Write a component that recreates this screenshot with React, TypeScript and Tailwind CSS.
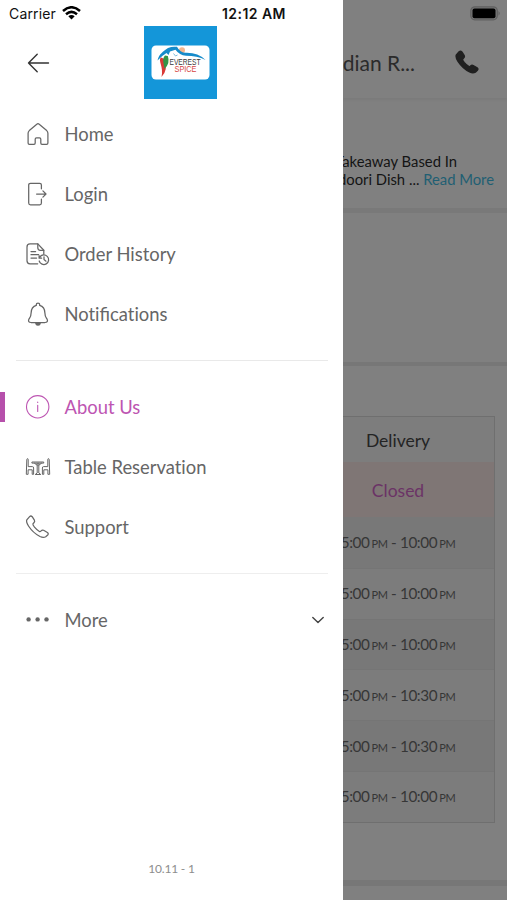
import type { ReactNode } from "react";

const icon = "h-6 w-6 overflow-visible";

function LineIcon({ children, width = 1.25 }: { children: ReactNode; width?: number }) {
  return (
    <svg className={icon} viewBox="0 0 24 24" fill="none" stroke="currentColor" strokeWidth={width} strokeLinecap="round" strokeLinejoin="round">
      {children}
    </svg>
  );
}

const HomeIcon = () => (
  <LineIcon>
    <path d="M12 1.7 Q12.6 1.7 13.2 2.2 L20.7 8.6 Q21.9 9.7 21.9 11.2 V21 Q21.9 22.3 20.6 22.3 H16 Q14.8 22.3 14.8 21 V17.2 Q14.8 15.8 13.5 15.8 H10.5 Q9.2 15.8 9.2 17.2 V21 Q9.2 22.3 8 22.3 H3.4 Q2.1 22.3 2.1 21 V11.2 Q2.1 9.7 3.3 8.6 L10.8 2.2 Q11.4 1.7 12 1.7Z" />
  </LineIcon>
);

const LoginIcon = () => (
  <LineIcon>
    <path d="M15.4 6.8 V3 Q15.4 1.3 13.7 1.3 H4.5 Q2.7 1.3 2.7 3 V21 Q2.7 22.8 4.5 22.8 H13.7 Q15.4 22.8 15.4 21 V17.2" />
    <path d="M10.6 12 H19.8 M16.9 8.9 L20 12 L16.9 15.1" />
  </LineIcon>
);

const HistoryIcon = () => (
  <LineIcon>
    <path d="M11.7 21.8 H4 Q1 21.8 1 18.8 V4.9 Q1 1.9 4 1.9 H11.8 L17.8 8.3 V12" />
    <path d="M11.8 1.9 V5.8 Q11.8 8.3 14.3 8.3 H17.8 M5 9.5 H9.6 M5 12.7 H12.6 M5 16 H10.6" />
    <path d="M13.7 15.3 A4.8 4.8 0 1 1 13.2 19 M13.1 13.7 V16.2 H15.6 M18 14.8 V17.5 L20 19.2" />
  </LineIcon>
);

const BellIcon = () => (
  <LineIcon>
    <path d="M10.3 3.4 V2.4 Q10.3 1 12 1 Q13.7 1 13.7 2.4 V3.4 Q18.8 4.8 18.9 11 C18.9 14.6 19.9 15.3 21.2 17.4 Q22.3 20.4 19 20.5 H5 Q1.7 20.4 2.8 17.4 C4.1 15.3 5.1 14.6 5.1 11 Q5.2 4.8 10.3 3.4Z" />
    <path d="M9.8 21.4 H14.2 Q14 23.2 12 23.2 Q10 23.2 9.8 21.4Z" fill="currentColor" />
  </LineIcon>
);

const InfoIcon = () => (
  <LineIcon width={1.1}>
    <circle cx="11.7" cy="11.8" r="11.2" />
    <path d="M11.7 10.3 V16.5 M11.7 7 V7.4" />
  </LineIcon>
);

const TableIcon = () => (
  <LineIcon width={1}>
    <path d="M.8 4.3 Q.8 3.7 1.5 3.7 Q2.2 3.7 2.2 4.3 V11.6 H6.4 Q7.6 11.6 7.6 13 V19.3 H6.2 V14.8 H2.1 V19.3 H.7Z" />
    <path d="M23.2 4.3 Q23.2 3.7 22.5 3.7 Q21.8 3.7 21.8 4.3 V11.6 H17.6 Q16.4 11.6 16.4 13 V19.3 H17.8 V14.8 H21.9 V19.3 H23.3Z" />
    <path d="M6.3 7 H17.7 V8.1 H6.3Z M11.2 8.2 V18 L9.2 19.5 H14.8 L12.8 18 V8.2 M8.5 8.2 L11.2 10.3 M15.5 8.2 L12.8 10.3" />
  </LineIcon>
);

const handset =
  "M1.4 5.1 L4.2 1.9 Q5.5 .7 6.8 2 L9 5.5 Q9.7 6.7 8.7 7.8 L7.5 9.2 Q7.2 10.1 9.1 12.5 Q11.6 15.5 14 16.8 Q14.8 17.2 15.7 16.1 Q16.8 14.9 18.2 15.6 L22 17.8 Q23.5 18.9 22.3 20.3 L20.3 22 Q18 23.4 14.6 21.8 Q7.7 18.3 3.1 11.3 Q.5 7.2 1.4 5.1Z";

const PhoneIcon = () => (
  <LineIcon>
    <path d={handset} transform="translate(-.6 -.3)" />
  </LineIcon>
);

const DotsIcon = () => (
  <svg className={icon} viewBox="0 0 24 24" fill="currentColor">
    <circle cx="2.6" cy="11.4" r="2.2" />
    <circle cx="11.6" cy="11.4" r="2.2" />
    <circle cx="20.5" cy="11.4" r="2.2" />
  </svg>
);

function MenuItem({ label, children, active, trailing }: { label: ReactNode; children: ReactNode; active?: boolean; trailing?: ReactNode }) {
  return (
    <a className={`flex h-[60px] items-center ${active ? "text-[#bd55b2]" : "text-[#666666]"}`}>
      <span className={`h-[30px] w-[5px] ${active ? "bg-[#b650ab]" : ""}`} />
      <span className="ml-[21px]">{children}</span>
      <span className="ml-[14.5px] grow text-[18.4px] leading-6 [font-variant-ligatures:none]">{label}</span>
      {trailing}
    </a>
  );
}

function Logo() {
  return (
    <div className="flex h-[73px] w-[73px] items-center justify-center bg-[#1496d9]">
      <svg className="h-[35px] w-[59px]" viewBox="0 0 59 35">
        <rect x=".5" y=".5" width="58" height="34" rx="4.5" fill="#fff" />
        <circle cx="31" cy="5.3" r="3" fill="#f5b78e" />
        <path d="M6.5 15.5 C8 9 12 6.5 17 3 Q21 1.2 26 1.8 Q29 7.8 35 7.8 Q47 7.5 54.5 15 Q46 10.8 35 10.8 Q28.5 10.5 24.5 4.8 L19 6.5 L17.5 10 L15.5 8 Q10.5 11 6.5 15.5Z" fill="#168bca" />
        <path d="M22.5 8.5 L24.5 11 L26.5 10" fill="none" stroke="#70b5d9" strokeWidth=".9" />
        <path d="M10 12.5 C6.5 15 13 22 10.5 32 Q17.5 25 13.5 14Z" fill="#d93936" />
        <path d="M14 10.5 C10.5 14 13 19 13.5 24 Q19.5 18 16.8 11Z" fill="#359447" />
        <text x="18.5" y="20.4" fontFamily="Liberation Sans, sans-serif" fontSize="8.3" fill="#383838" textLength="31" lengthAdjust="spacingAndGlyphs">EVEREST</text>
        <text x="23.5" y="27.4" fontFamily="Liberation Sans, sans-serif" fontSize="8.3" fill="#d5443f" textLength="22" lengthAdjust="spacingAndGlyphs">SPICE</text>
      </svg>
    </div>
  );
}

function Drawer() {
  return (
    <aside className="flex h-full w-[343px] shrink-0 flex-col bg-white">
      <div className="flex h-[26px] items-center font-[Inter,sans-serif] text-[#111]">
        <span className="ml-[9px] w-[47px] text-[14px] tracking-[0.15px]">Carrier</span>
        <svg className="ml-[6px] h-[14px] w-[19px]" viewBox="0 0 19 14" fill="none" stroke="#000" strokeWidth="2.5">
          <path d="M1 5 Q9.5 -2.5 18 5 M4 8.2 Q9.5 3.5 15 8.2" />
          <path d="M6.3 10.3 Q9.5 7.8 12.7 10.3 L9.5 13.5Z" fill="#000" stroke="none" />
        </svg>
        <span className="ml-[141px] whitespace-nowrap text-[14px] font-semibold tracking-[0.45px]">12:12 AM</span>
      </div>
      <div className="-mt-px flex h-[74px] items-center">
        <svg className="ml-[27px] mt-px h-[20px] w-[23px]" viewBox="0 0 23 20" fill="none" stroke="#333" strokeWidth="1.4" strokeLinecap="round" strokeLinejoin="round">
          <path d="M21.5 10 H1.5 M10.2 1.3 L1.5 10 L10.2 18.7" />
        </svg>
        <div className="ml-[94px]"><Logo /></div>
      </div>
      <nav className="mt-[5px]">
        <MenuItem label="Home"><HomeIcon /></MenuItem>
        <MenuItem label="Login"><LoginIcon /></MenuItem>
        <MenuItem label="Order History"><HistoryIcon /></MenuItem>
        <MenuItem label={<>Noti<span className="[font-variant-ligatures:normal]">fi</span>cations</>}><BellIcon /></MenuItem>
        <hr className="mt-4 mr-[15px] mb-4 ml-4 border-[#e9e9e9]" />
        <MenuItem label="About Us" active><InfoIcon /></MenuItem>
        <MenuItem label="Table Reservation"><TableIcon /></MenuItem>
        <MenuItem label="Support"><PhoneIcon /></MenuItem>
        <hr className="mt-4 mr-[15px] mb-4 ml-4 border-[#eeeeee]" />
        <MenuItem
          label="More"
          trailing={
            <svg className="mr-[19px] h-2 w-3" viewBox="0 0 12 8" fill="none" stroke="#444" strokeWidth="1.4" strokeLinecap="round" strokeLinejoin="round">
              <path d="M.8 1.4 L6 6.6 L11.2 1.4" />
            </svg>
          }
        >
          <DotsIcon />
        </MenuItem>
      </nav>
      <footer className="mt-auto pb-[22px] text-center text-[12px] leading-[18px] tracking-[-0.2px] text-[#8d8d8d]">10.11 - 1</footer>
    </aside>
  );
}

const hours = ["10:00", "10:00", "10:00", "10:30", "10:30", "10:00"];

const Meridiem = () => <small className="ml-[2px] text-[11px]">PM</small>;

function DimmedPage() {
  return (
    <main className="flex h-full w-[164px] shrink-0 flex-col overflow-hidden bg-[#808080]">
      <div className="flex h-[26px] items-center justify-end pr-[6px]">
        <svg className="h-[15px] w-[31px]" viewBox="0 0 31 15">
          <rect x=".8" y=".8" width="26.5" height="13" rx="4" fill="#777" stroke="#606060" strokeWidth="1.2" />
          <rect x="2.5" y="2.5" width="23" height="9.7" rx="2" fill="#000" />
          <path d="M28.5 5 Q31 7.3 28.5 9.7Z" fill="#606060" />
        </svg>
      </div>
      <header className="flex h-[72px] items-center justify-end pr-7 shadow-[0_2px_3px_#0000000d]">
        <span className="mr-[40px] whitespace-nowrap pt-px text-[21px] text-[#2b2b2b]">Indian R...</span>
        <svg className="h-6 w-6 shrink-0" viewBox="0 0 24 24" fill="#202020"><path d={handset} stroke="#202020" strokeWidth="1.6" /></svg>
      </header>
      <section className="flex h-[115px] flex-col items-end border-b-[5px] border-[#797979] pt-[54px] text-[14.8px] leading-[18px] text-[#141414]">
        <p className="mr-[50px] whitespace-nowrap">Takeaway Based In</p>
        <p className="mr-[13px] whitespace-nowrap">Tandoori Dish ... <a className="text-[#1f5f73]">Read More</a></p>
      </section>
      <section className="h-[153px] border-b-4 border-[#777777]" />
      <section className="flex h-[520px] flex-col items-end border-b-[6px] border-[#777777] pt-[50px] pr-[12px]">
        <div className="w-[194px] shrink-0 border border-[#6f6f6f] text-center text-[#363636] [font-variant-ligatures:none]">
          <div className="flex h-[45px] items-center justify-center bg-[#7d7d7d] pt-[3px] text-[17.5px] text-[#242424]">Delivery</div>
          <div className="flex h-[55px] items-center justify-center bg-[#7f7675] pt-[3px] text-[17.5px] text-[#6b3366]">Closed</div>
          {hours.map((end, i) => (
            <div key={i} className={`flex h-[50.8px] items-center justify-center border-[#757575] text-[15.3px] tracking-[-0.4px] whitespace-pre ${i ? "border-t" : ""} ${i % 2 ? "bg-[#7c7c7c]" : "bg-[#787878]"}`}>
              <span>5:00<Meridiem /> - {end}<Meridiem /></span>
            </div>
          ))}
        </div>
      </section>
    </main>
  );
}

export default function App() {
  return (
    <div className="flex h-[900px] w-[507px] overflow-hidden font-[Lato,sans-serif]">
      <Drawer />
      <DimmedPage />
    </div>
  );
}
